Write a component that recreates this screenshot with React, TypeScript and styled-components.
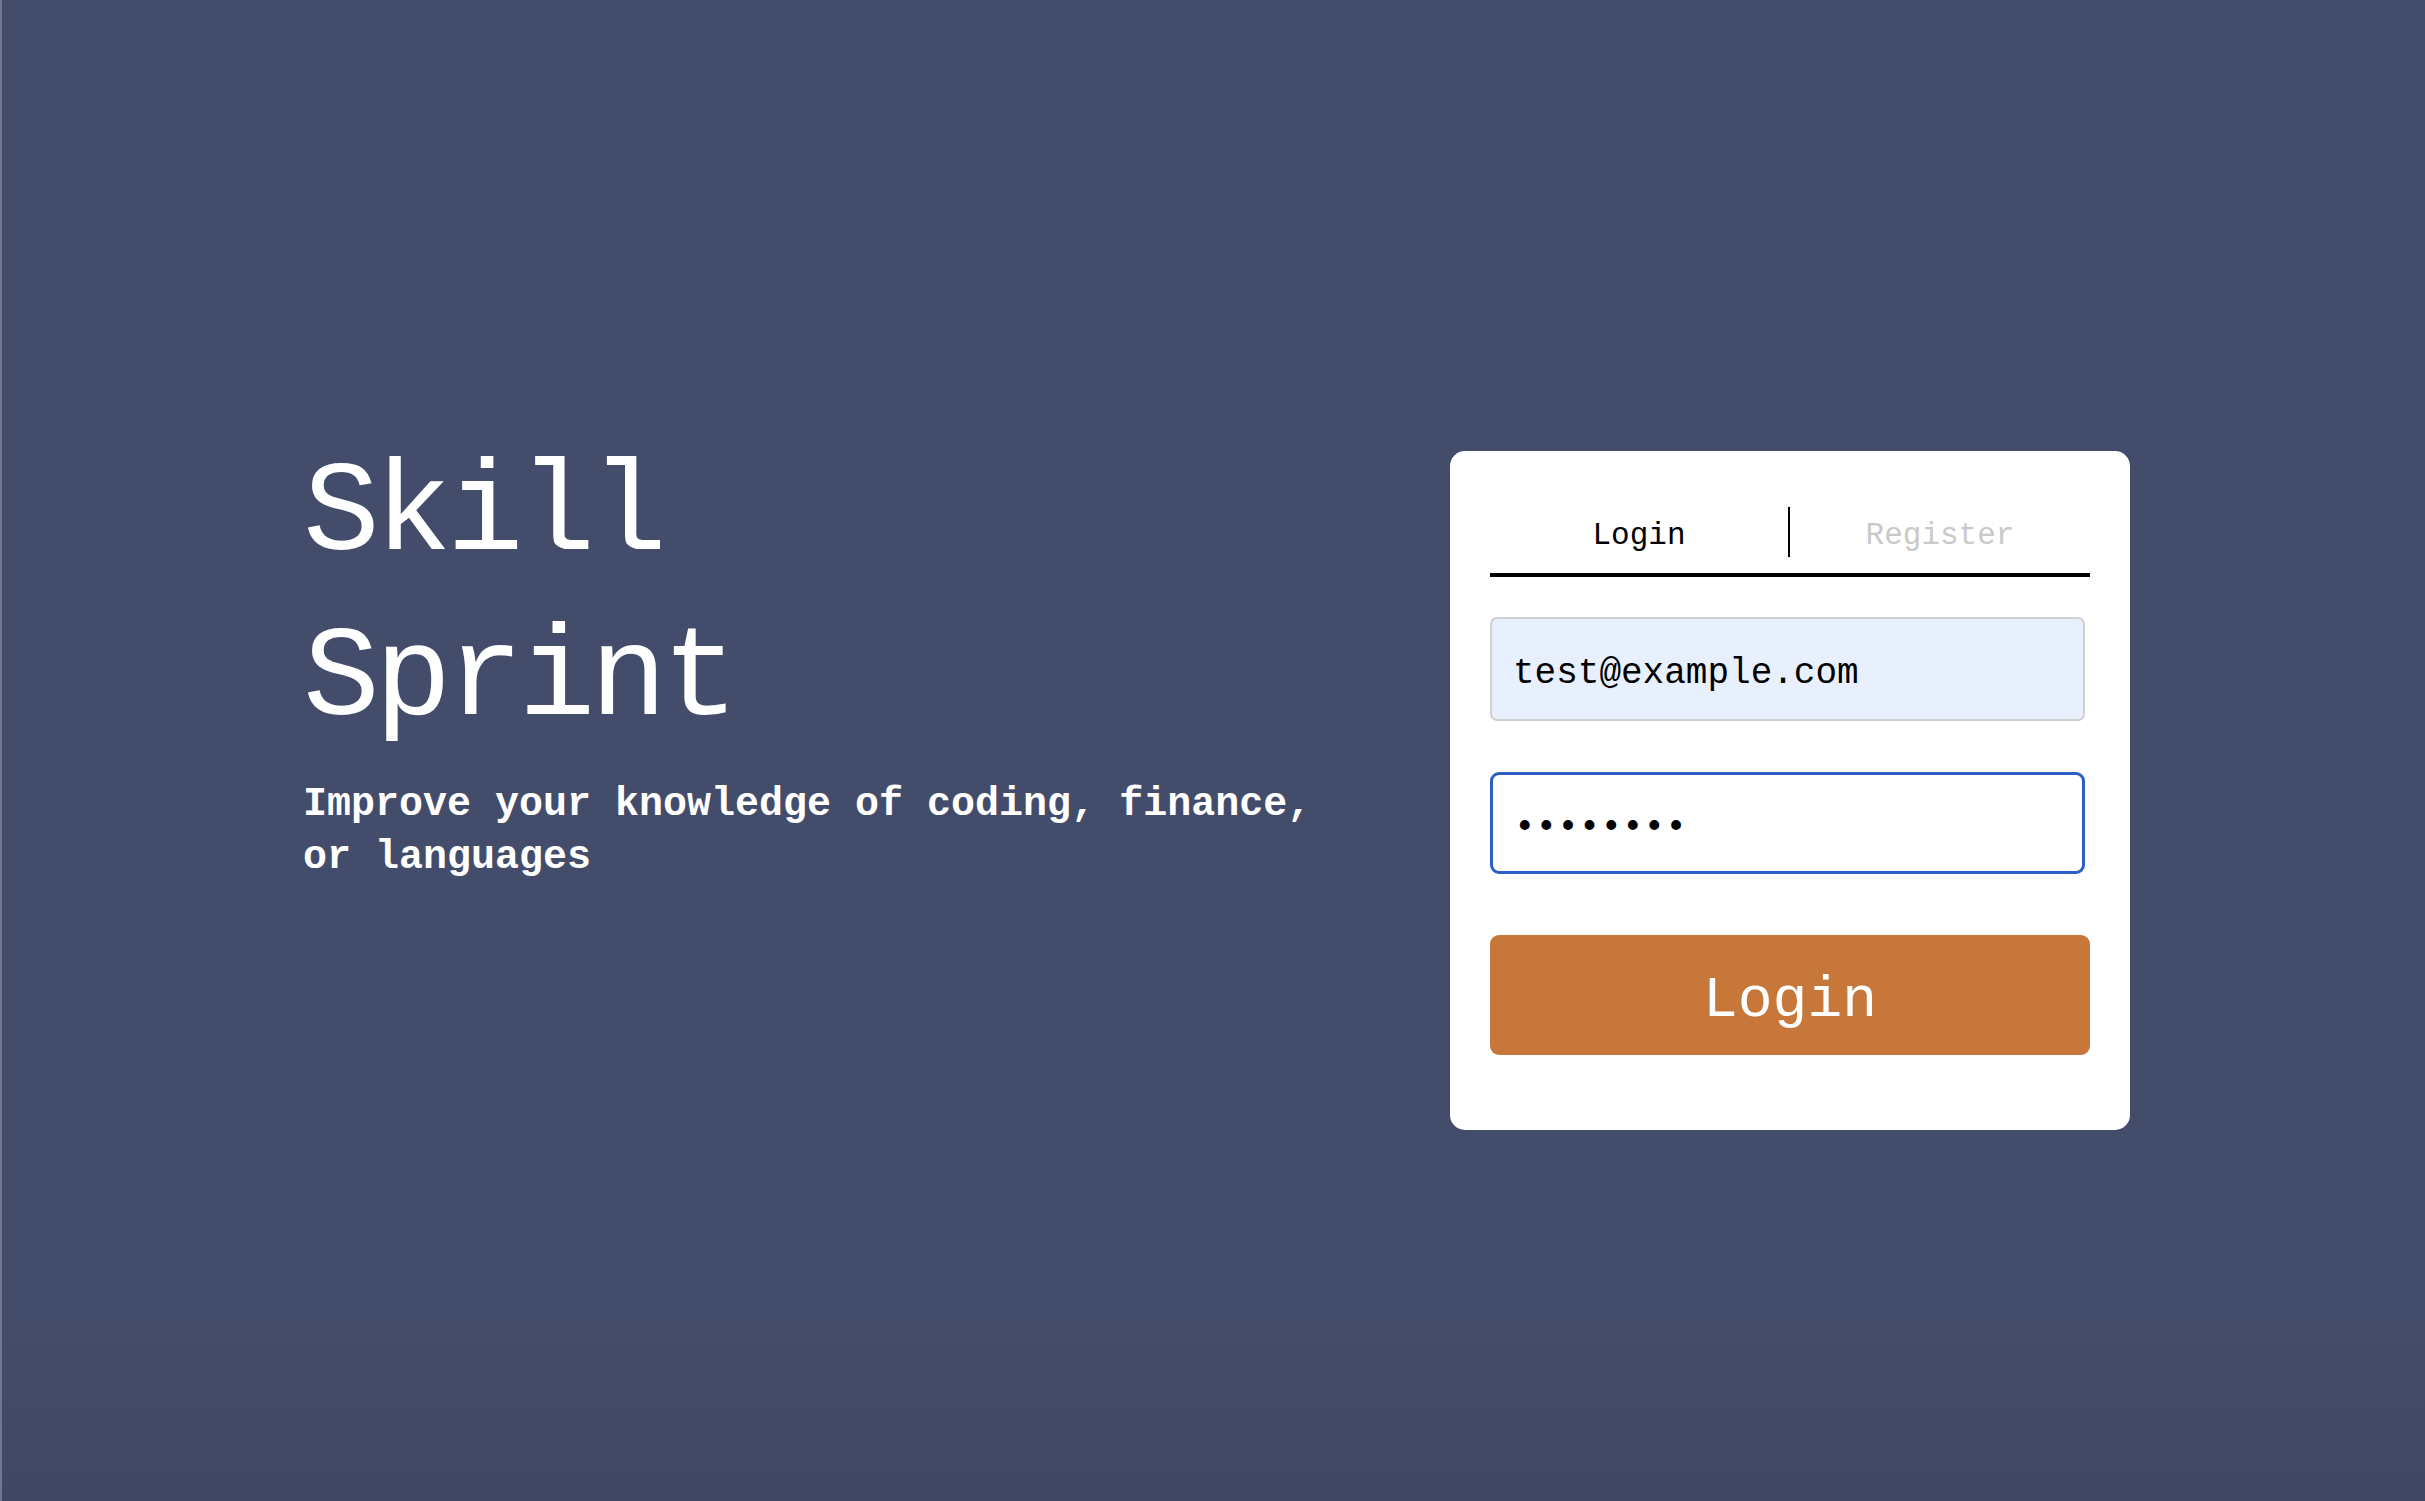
import React from "react";
import styled, { createGlobalStyle } from "styled-components";

const GlobalStyle = createGlobalStyle`
  html, body {
    margin: 0;
    padding: 0;
    height: 100%;
  }
  body {
    font-family: "Liberation Mono", "DejaVu Sans Mono", monospace;
    background: #434c6a;
  }
  #root {
    min-height: 100vh;
  }
`;

const Page = styled.main`
  box-sizing: border-box;
  min-height: 100vh;
  display: flex;
  align-items: flex-start;
  gap: 107px;
  padding: 432px 0 0 301px;
  background: linear-gradient(to bottom, #434c6a 0%, #434c6a 88%, #3f4764 100%);
  border-left: 2px solid #6e7692;
  color: #ffffff;
`;

const Hero = styled.section`
  width: 1040px;
  display: flex;
  flex-direction: column;
  gap: 16px;
`;

const Title = styled.h1`
  margin: 0;
  font-family: "Liberation Mono", monospace;
  font-weight: 400;
  font-size: 128px;
  line-height: 165px;
  letter-spacing: -5px;
  color: #ffffff;
`;

const Tagline = styled.p`
  margin: 0;
  font-family: "Liberation Mono", monospace;
  font-weight: 700;
  font-size: 40px;
  line-height: 53px;
  color: #ffffff;
`;

const Card = styled.section`
  box-sizing: border-box;
  width: 680px;
  margin-top: 19px;
  padding: 56px 40px 75px;
  background: #ffffff;
  border-radius: 15px;
  display: flex;
  flex-direction: column;
`;

const Tabs = styled.nav`
  display: grid;
  grid-template-columns: 1fr 1fr;
  padding-bottom: 16px;
  border-bottom: 4px solid #000000;
`;

const Tab = styled.button<{ $active?: boolean; $divider?: boolean }>`
  height: 50px;
  padding: 8px 0 0;
  margin: 0;
  border: none;
  border-right: ${(p) => (p.$divider ? "2px solid #000" : "none")};
  background: transparent;
  font-family: "Liberation Mono", monospace;
  font-size: 31px;
  line-height: 42px;
  color: ${(p) => (p.$active ? "#000000" : "#c9c9c9")};
  cursor: pointer;
`;

const Form = styled.form`
  display: flex;
  flex-direction: column;
  margin-top: 40px;
`;

const Field = styled.input<{ $variant: "filled" | "focused" }>`
  box-sizing: border-box;
  width: 595px;
  height: ${(p) => (p.$variant === "filled" ? "104px" : "102px")};
  margin: 0;
  padding: 9px 21px 0;
  border-radius: ${(p) => (p.$variant === "filled" ? "7px" : "9px")};
  border: ${(p) =>
    p.$variant === "filled" ? "2px solid #d0d0d0" : "3px solid #2b5fc5"};
  background: ${(p) => (p.$variant === "filled" ? "#e8f0fe" : "#ffffff")};
  font-family: "Liberation Mono", monospace;
  font-size: 36px;
  color: #000000;
  outline: none;
  & + & {
    margin-top: 51px;
  }
`;

const Submit = styled.button`
  width: 600px;
  height: 120px;
  margin-top: 61px;
  border: none;
  border-radius: 9px;
  background: #c8773b;
  color: #ffffff;
  font-family: "Liberation Mono", monospace;
  font-size: 58px;
  line-height: 108px;
  padding: 12px 0 0;
  cursor: pointer;
`;

export default function App() {
  return (
    <>
      <GlobalStyle />
      <Page>
        <Hero>
          <Title>
            Skill
            <br />
            Sprint
          </Title>
          <Tagline>
            Improve your knowledge of coding, finance, or languages
          </Tagline>
        </Hero>
        <Card>
          <Tabs>
            <Tab type="button" $active $divider>
              Login
            </Tab>
            <Tab type="button">Register</Tab>
          </Tabs>
          <Form onSubmit={(e) => e.preventDefault()}>
            <Field
              $variant="filled"
              type="email"
              defaultValue="test@example.com"
              readOnly
            />
            <Field
              $variant="focused"
              type="password"
              defaultValue="password"
              readOnly
            />
            <Submit type="submit">Login</Submit>
          </Form>
        </Card>
      </Page>
    </>
  );
}
